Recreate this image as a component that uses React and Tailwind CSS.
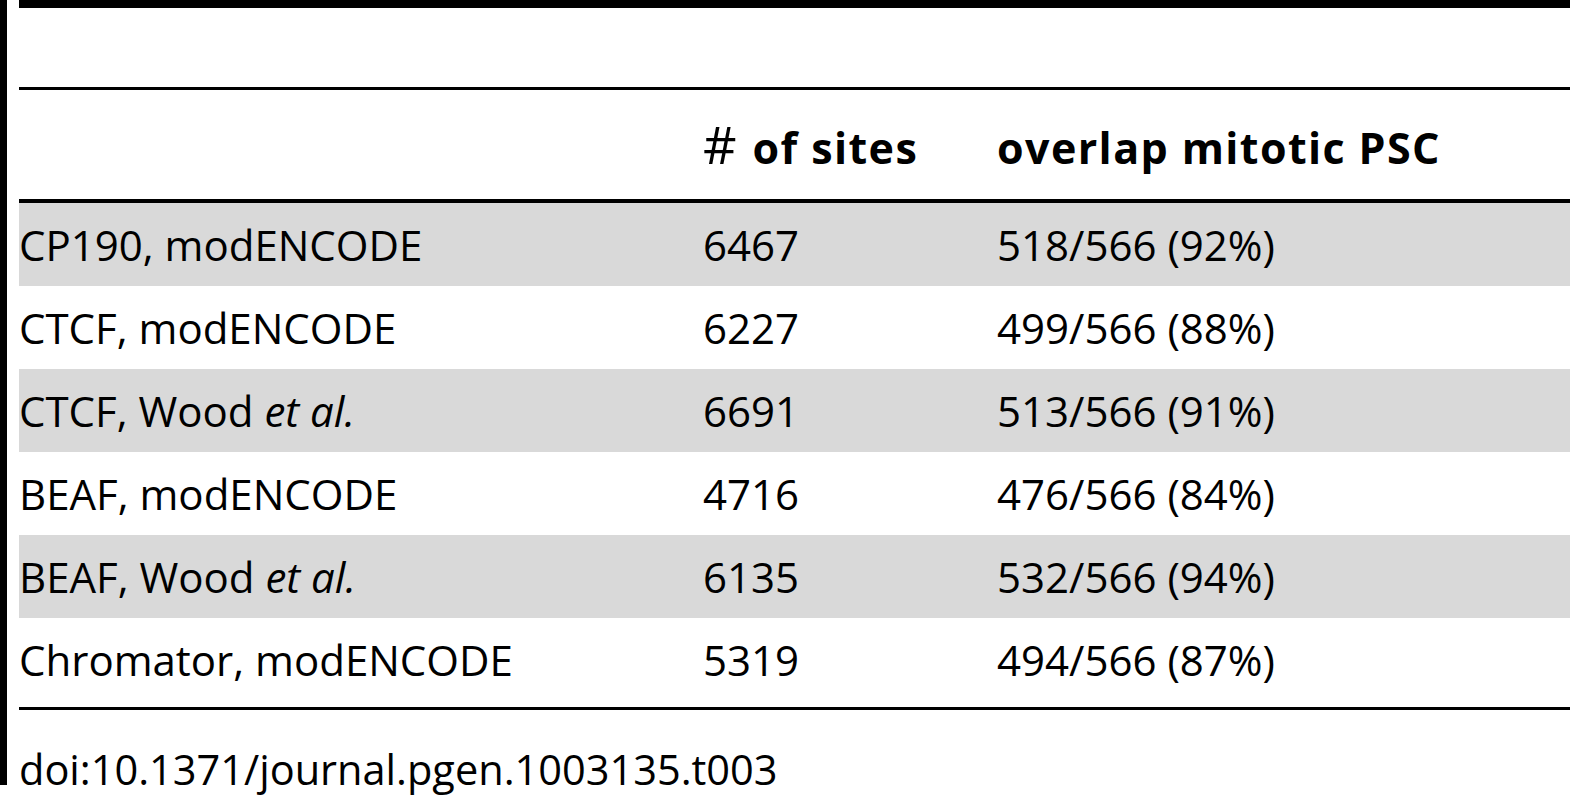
const rows = [
  { name: 'CP190, modENCODE', sites: '6467', overlap: '518/566 (92%)' },
  { name: 'CTCF, modENCODE', sites: '6227', overlap: '499/566 (88%)' },
  { name: 'CTCF, Wood', etal: true, sites: '6691', overlap: '513/566 (91%)' },
  { name: 'BEAF, modENCODE', sites: '4716', overlap: '476/566 (84%)' },
  { name: 'BEAF, Wood', etal: true, sites: '6135', overlap: '532/566 (94%)' },
  { name: 'Chromator, modENCODE', sites: '5319', overlap: '494/566 (87%)' },
];

export default function App() {
  return (
    <div
      className="w-[1570px] h-[800px] bg-white text-black flex overflow-hidden"
      style={{ fontFamily: '"Open Sans", "Noto Sans", sans-serif' }}
    >
      <div className="w-[7px] h-[785px] bg-black shrink-0" />
      <div className="flex-1 ml-[12px] flex flex-col">
        <div className="h-[8px] bg-black" />
        <div className="h-[79px]" />
        <div className="h-[3px] bg-black" />
        {/* header */}
        <div className="h-[109px] flex items-center text-[43px] font-bold leading-none tracking-[1.4px] pt-[6px]">
          <div className="w-[684px]" />
          <div className="w-[294px]">
            <span className="font-normal text-[52px] leading-[0] mr-[2px]">#</span> of sites
          </div>
          <div>overlap mitotic PSC</div>
        </div>
        <div className="h-[4px] bg-black" />
        {rows.map((r, i) => (
          <div
            key={i}
            className={`flex items-center text-[42px] leading-none ${
              i % 2 === 0 ? 'bg-[#d9d9d9]' : 'bg-white'
            } ${i === rows.length - 1 ? 'h-[89px] pb-[6px]' : 'h-[83px]'}`}
          >
            <div className="w-[684px]">
              {r.name}
              {r.etal && <i> et al.</i>}
            </div>
            <div className="w-[294px]">{r.sites}</div>
            <div>{r.overlap}</div>
          </div>
        ))}
        <div className="h-[3px] bg-black" />
        <div className="pt-[39px] text-[41.5px] leading-none">doi:10.1371/journal.pgen.1003135.t003</div>
      </div>
    </div>
  );
}
